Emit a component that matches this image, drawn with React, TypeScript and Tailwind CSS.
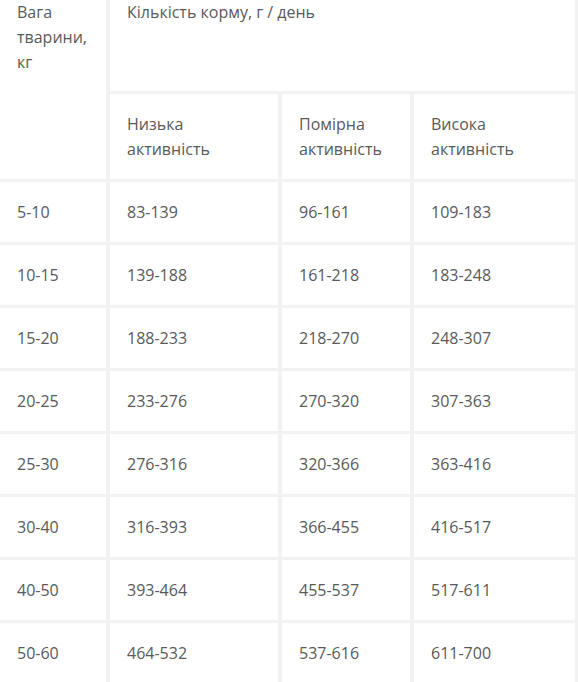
import React from 'react';

const rows = [
  ['5-10', '83-139', '96-161', '109-183'],
  ['10-15', '139-188', '161-218', '183-248'],
  ['15-20', '188-233', '218-270', '248-307'],
  ['20-25', '233-276', '270-320', '307-363'],
  ['25-30', '276-316', '320-366', '363-416'],
  ['30-40', '316-393', '366-455', '416-517'],
  ['40-50', '393-464', '455-537', '517-611'],
  ['50-60', '464-532', '537-616', '611-700'],
];

export default function App() {
  return (
    <div className="w-[578px] h-[682px] overflow-hidden bg-white text-[16px] leading-[25px] text-[#595959] font-['Open_Sans',sans-serif]">
      <div className="grid grid-cols-[106px_168px_128px_161px] grid-rows-[91px_85px] auto-rows-[60px] gap-x-[4px] gap-y-[3px] bg-[#f2f2f2] pr-[3px]">
        {/* Header */}
        <div className="row-span-2 bg-white pl-[17px] pr-2">
          Вага<br />тварини,<br />кг
        </div>
        <div className="col-span-3 bg-white pl-[17px]">Кількість корму, г / день</div>
        <div className="bg-white pl-[17px] flex items-center">Низька<br />активність</div>
        <div className="bg-white pl-[17px] flex items-center">Помірна<br />активність</div>
        <div className="bg-white pl-[17px] flex items-center">Висока<br />активність</div>

        {/* Body */}
        {rows.map((r) =>
          r.map((v, i) => (
            <div key={r[0] + i} className="bg-white pl-[17px] flex items-center">
              {v}
            </div>
          ))
        )}
      </div>
    </div>
  );
}
